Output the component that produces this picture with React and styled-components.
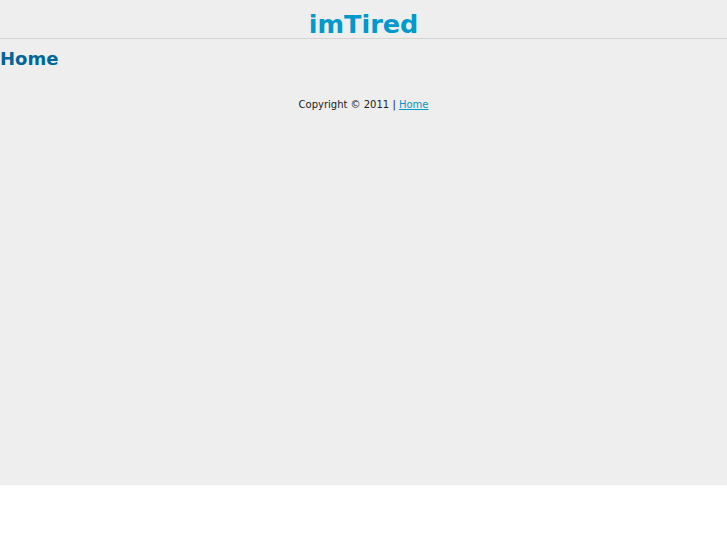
import styled, { createGlobalStyle } from "styled-components";

const Global = createGlobalStyle`
  html, body {
    margin: 0;
    padding: 0;
    background: #fff;
    font-family: "DejaVu Sans", Verdana, sans-serif;
  }
`;

const Wrapper = styled.div`
  background: #eeeeee;
  height: 485px;
`;

const Header = styled.div`
  height: 38px;
  border-bottom: 1px solid #d4d4d4;
  text-align: center;
`;

const Logo = styled.h1`
  margin: 0;
  padding-top: 9px;
  font-size: 25.5px;
  line-height: 30px;
  font-weight: bold;
  color: #0099cc;
`;

const PageTitle = styled.h2`
  margin: 0;
  padding-top: 9px;
  font-size: 18px;
  line-height: 22px;
  font-weight: bold;
  color: #006699;
`;

const Footer = styled.p`
  margin: 0;
  padding-top: 28px;
  text-align: center;
  font-size: 10px;
  line-height: 14px;
  color: #222;
`;

const FooterLink = styled.a`
  color: #0099cc;
  text-decoration: underline;
`;

export default function App() {
  return (
    <>
      <Global />
      <Wrapper>
        <Header>
          <Logo>imTired</Logo>
        </Header>
        <PageTitle>Home</PageTitle>
        <Footer>
          Copyright © 2011 | <FooterLink href="#">Home</FooterLink>
        </Footer>
      </Wrapper>
    </>
  );
}
